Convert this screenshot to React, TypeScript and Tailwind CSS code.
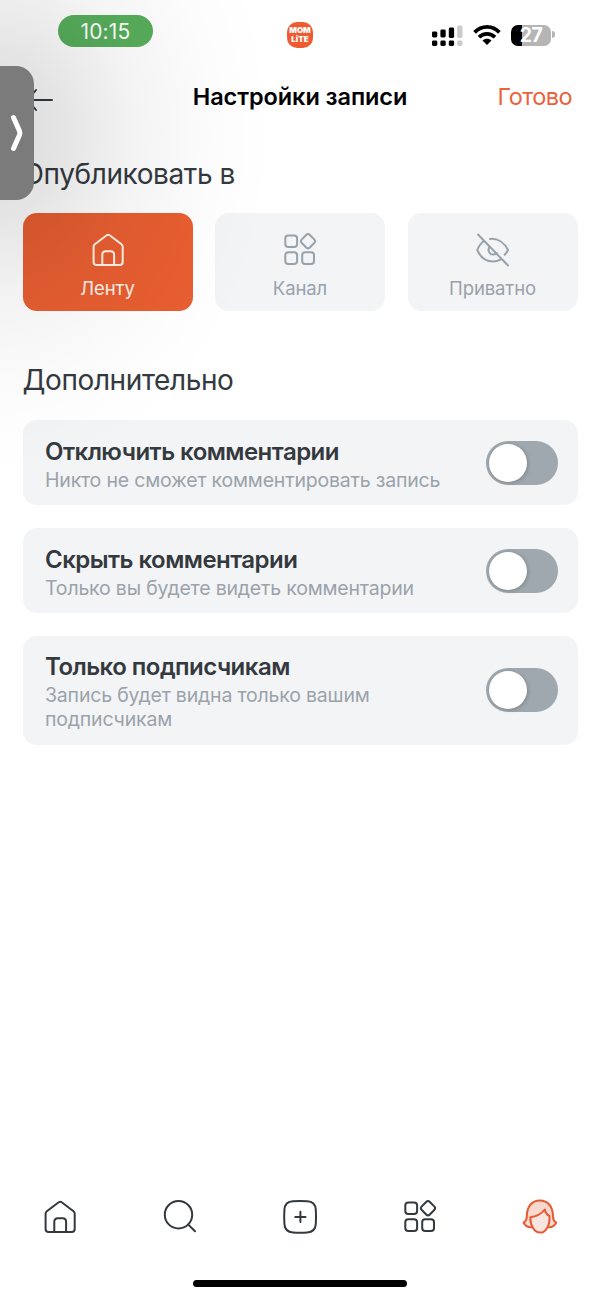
import { useState } from 'react'
import clsx from 'clsx'

type IconProps = { className?: string }

function HomeIcon({ className }: IconProps) {
  return (
    <svg className={className} viewBox="0 0 36 36" fill="none" stroke="currentColor" strokeWidth="2" strokeLinejoin="round">
      <path d="M3.600 15c0-1.200.3-2 1.200-2.700L16.700 3.300c1-.8 2-.8 3 0l11.800 9c.9.7 1.200 1.500 1.200 2.700V30c0 1.900-1.100 3-3 3H6.600c-1.900 0-3-1.100-3-3z" />
      <path d="M12.300 33V22.700c0-2.300 1.200-3.500 3.500-3.500h4.800c2.300 0 3.500 1.200 3.500 3.500V33" />
    </svg>
  )
}

function GridIcon({ className }: IconProps) {
  return (
    <svg className={className} viewBox="0 0 36 36" fill="none" stroke="currentColor" strokeWidth="2">
      <rect x="3.300" y="3.600" width="11.800" height="11.400" rx="3" />
      <rect x="3.300" y="20.300" width="11.800" height="11.600" rx="3" />
      <rect x="20.200" y="20.300" width="11.800" height="11.600" rx="3" />
      <rect x="20.300" y="3.500" width="11.400" height="11.400" rx="2.600" transform="rotate(45 26 9.200)" />
    </svg>
  )
}

function HiddenIcon({ className }: IconProps) {
  return (
    <svg className={className} viewBox="0 0 36 36" fill="none" stroke="currentColor" strokeWidth="2" strokeLinecap="round">
      <path d="M3 2.500l30 31" />
      <path d="M15 7c8-1 14.500 4 18 11-.8 1.900-2 3.500-3.300 4.800" />
      <path d="M9 9C6 11 3.700 14.300 2.300 18c3.200 7.600 9 11.500 15.700 11.500 2.700 0 5.200-.6 7.300-1.900" />
      <path d="M14.300 15c-2.200 4 .8 8 4.500 7.400 1.300-.1 2.200-.6 2.900-1.400" />
    </svg>
  )
}

function SearchIcon({ className }: IconProps) {
  return (
    <svg className={className} viewBox="0 0 36 36" fill="none" stroke="currentColor" strokeWidth="2" strokeLinecap="round">
      <circle cx="16.500" cy="15.700" r="13.700" />
      <path d="M26.300 25.600l6.700 6.700" />
    </svg>
  )
}

function PlusIcon({ className }: IconProps) {
  return (
    <svg className={className} viewBox="0 0 36 36" fill="none" stroke="currentColor" strokeWidth="2" strokeLinecap="round">
      <path d="M11 2.200c4.700-.3 9.500-.3 14.200 0 5.600.3 8.300 3 8.600 8.500.3 4.700.3 9.500 0 14.200-.3 5.500-3 8.200-8.600 8.500-4.700.3-9.500.3-14.200 0-5.600-.3-8.300-3-8.600-8.500-.3-4.700-.3-9.500 0-14.200.3-5.500 3-8.200 8.600-8.500z" />
      <path d="M18.400 12.800v10.200M13.300 17.900h10.200" />
    </svg>
  )
}

function ProfileIcon({ className }: IconProps) {
  return (
    <svg className={className} viewBox="0 0 36 36" fill="none" stroke="#e55b35" strokeWidth="2" strokeLinejoin="round">
      <path fill="#f9d9ce" d="M10.500 28c-3.500.6-7-.6-8.900-4.300 2-1.300 3.200-3.200 3.200-6.200C4.800 7.500 9.800 1.500 17.800 1.500S31 7.500 31 17.500c0 3 1.100 4.900 3.200 6.200-2 3.700-5.200 4.900-8.700 4.300" />
      <path fill="#f9e5df" d="M8.300 18.200c5.200-.5 11-3.200 14.500-7.700.5 3 2.200 5.200 4.700 6.700C28 26.500 23.800 33.600 18 33.600S8.300 26.700 8.300 18.200z" />
    </svg>
  )
}

function StatusBar() {
  return (
    <div className="flex h-[69px] shrink-0 items-center">
      <div className="-mt-[7px] ml-[58px] flex h-8 w-[95px] items-center justify-center rounded-full bg-[#57ae5b] pt-px text-[21px] tracking-[0.200px] text-white">
        10:15
      </div>
      <div className="ml-[134px] flex size-[26px] flex-col items-center justify-center rounded-[10px] bg-[#ee5b31] text-[8px] leading-[10px] font-black text-white">
        <span className="h-[9px]">MOM</span>
        <span>LiTE</span>
      </div>
      <svg className="mt-0.5 ml-[119px] h-[22px] w-[31px]" viewBox="0 0 31 22">
        <rect x="0" y="6.500" width="5.300" height="6" rx="1.400" />
        <rect x="8.400" y="4.500" width="5.300" height="8" rx="1.400" />
        <rect x="16.800" y="2.500" width="5.300" height="10.500" rx="1.400" />
        <rect x="0" y="15.500" width="5.300" height="5.500" rx="1.400" />
        <rect x="8.400" y="15.500" width="5.300" height="5.500" rx="1.400" />
        <rect x="16.800" y="15.500" width="5.300" height="5.500" rx="1.400" />
        <rect x="25.200" y="0.500" width="5.300" height="12.500" rx="1.400" fill="#cbcbcb" />
        <rect x="25.200" y="15.500" width="5.300" height="5.500" rx="1.400" fill="#cbcbcb" />
      </svg>
      <svg className="ml-[10px] h-5 w-7" viewBox="0 0 28 20" fill="none" stroke="#000" strokeWidth="3.800">
        <path d="M1.600 7.400c6.900-7.300 17.900-7.300 24.800 0" />
        <path d="M6 12.200c4.600-4.500 11.400-4.500 16 0" />
        <path d="M14 20l-4.500-4.500c2.600-2.200 6.400-2.200 9 0z" fill="#000" stroke="none" />
      </svg>
      <div className="mt-px ml-[10px] flex h-[21px] w-10 items-center justify-center rounded-[7px] bg-linear-to-r from-black from-27% to-[#b5b5b5] to-27% pt-0.5 text-[19.500px] font-bold tracking-[-0.600px] text-white">
        27
      </div>
      <div className="ml-px h-[7px] w-[2.500px] rounded-r-full bg-[#b5b5b5]" />
    </div>
  )
}

const targets = [
  { id: 'feed', label: 'Ленту', Icon: HomeIcon },
  { id: 'channel', label: 'Канал', Icon: GridIcon },
  { id: 'private', label: 'Приватно', Icon: HiddenIcon },
]

const options = [
  { title: 'Отключить комментарии', text: 'Никто не сможет комментировать запись', box: 'h-[85px]' },
  { title: 'Скрыть комментарии', text: 'Только вы будете видеть комментарии', box: 'h-[85px]' },
  { title: 'Только подписчикам', text: 'Запись будет видна только вашим подписчикам', box: 'h-[108.500px]' },
]

function Switch({ checked, onClick }: { checked: boolean; onClick: () => void }) {
  return (
    <button
      role="switch"
      aria-checked={checked}
      onClick={onClick}
      className={clsx(
        'flex h-11 w-[72px] shrink-0 items-center rounded-full px-[3px]',
        checked ? 'justify-end bg-[#e85e31]' : 'bg-[#9fa8ae]',
      )}
    >
      <span className="size-[38px] rounded-full bg-white shadow-[1px_1px_4px_rgba(0,0,0,0.2)]" />
    </button>
  )
}

export default function App() {
  const [target, setTarget] = useState('feed')
  const [enabled, setEnabled] = useState<string[]>([])

  const toggle = (title: string) =>
    setEnabled((list) => (list.includes(title) ? list.filter((item) => item !== title) : [...list, title]))

  return (
    <div className="relative flex h-[1297px] w-[600px] flex-col overflow-hidden bg-white font-['Inter',sans-serif] text-[#34393e]">
      <StatusBar />

      <header className="flex h-14 shrink-0 items-center justify-between px-[28px]">
        <svg className="mt-[6px] h-6 w-[75px]" viewBox="0 0 75 24" fill="none" stroke="#34393e" strokeWidth="2" strokeLinecap="round" strokeLinejoin="round">
          <path d="M24 12H1M8 2L0 12l8 10" />
        </svg>
        <h1 className="text-[23.500px] font-semibold tracking-[-0.080px] text-black">Настройки записи</h1>
        <button className="w-[75px] text-right text-[23.500px] tracking-[-0.550px] whitespace-nowrap text-[#e9633d]">Готово</button>
      </header>

      <main className="flex flex-col px-[22.500px]">
        <h2 className="mt-[29px] h-10 text-[28px] leading-[40px] tracking-[-0.400px]">Опубликовать в</h2>
        <div className="mt-[19px] grid grid-cols-3 gap-[22.500px]">
          {targets.map(({ id, label, Icon }) => (
            <button
              key={id}
              onClick={() => setTarget(id)}
              className={clsx(
                'flex h-[98px] flex-col items-center rounded-[14px] pt-[19px]',
                target === id ? 'bg-[#e85e31] text-[#fff3e8]' : 'bg-[#f3f4f6] text-[#98a2aa]',
              )}
            >
              <Icon className="size-9" />
              <span className="mt-[6px] text-[18.500px] leading-7 tracking-[-0.100px]">{label}</span>
            </button>
          ))}
        </div>

        <h2 className="mt-[49px] h-10 text-[28px] leading-[40px] tracking-[-0.400px]">Дополнительно</h2>
        <div className="mt-5 flex flex-col gap-[23px]">
          {options.map(({ title, text, box }) => (
            <section key={title} className={clsx('flex items-center justify-between rounded-[14px] bg-[#f3f4f6] pr-[19.500px] pl-[22.500px]', box)}>
              <div className="mt-0.5 w-[405px]">
                <h3 className="text-[24px] leading-8 font-semibold tracking-[-0.530px]">{title}</h3>
                <p className="text-[19.500px] leading-6 tracking-[-0.190px] text-[#9aa3aa]">{text}</p>
              </div>
              <Switch checked={enabled.includes(title)} onClick={() => toggle(title)} />
            </section>
          ))}
        </div>
      </main>

      <nav className="mt-auto grid h-[60px] shrink-0 grid-cols-5 place-items-center">
        <HomeIcon className="size-9" />
        <SearchIcon className="size-9" />
        <PlusIcon className="size-9" />
        <GridIcon className="size-9" />
        <ProfileIcon className="size-9" />
      </nav>
      <div className="mx-auto mt-[33px] mb-[10px] h-[7px] w-[214px] shrink-0 rounded-full bg-black" />

      {/* side handle and the soft shade around it */}
      <div className="pointer-events-none absolute inset-0 bg-[radial-gradient(275px_345px_at_0px_133px,rgba(0,0,0,0.14),rgba(0,0,0,0.105)_22%,rgba(0,0,0,0.045)_50%,rgba(0,0,0,0.01)_78%,transparent)]" />
      <div className="absolute top-[66px] left-0 flex h-[134px] w-[34px] items-center rounded-r-[18px] bg-[#7b7b7b]">
        <svg className="ml-[9px] h-10 w-4" viewBox="0 0 16 40" fill="none" stroke="#fff" strokeWidth="5" strokeLinecap="round" strokeLinejoin="round">
          <path d="M4.500 4.500L10.500 18c.5 1.300.5 2.700 0 4L4.500 35.500" />
        </svg>
      </div>
    </div>
  )
}
